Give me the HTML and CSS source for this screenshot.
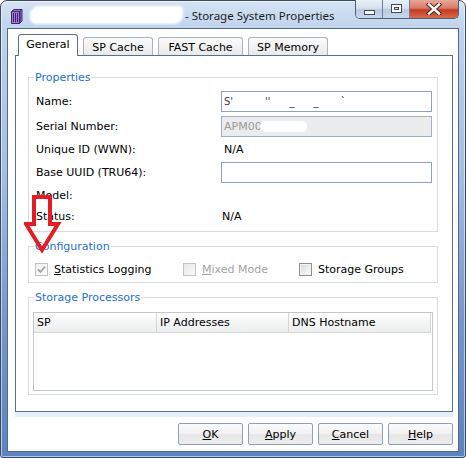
FILE: index.html
```html
<!DOCTYPE html>
<html>
<head>
<meta charset="utf-8">
<link rel="stylesheet" href="styles.css">
</head>
<body>
<div class="window">
  <div class="titlebar">
    <svg class="app-icon" width="13" height="16" viewBox="0 0 13 16">
      <path d="M1.5 3.5 L4 1.5 H12 V13 L9.5 15.5 H1.5 Z" fill="#a57ad8" stroke="#3b2563" stroke-width="1"/>
      <path d="M1.5 3.5 H9.5 V15.5 M9.5 3.5 L12 1.5" fill="none" stroke="#3b2563" stroke-width="1"/>
      <path d="M10 3.5 L12 1.8 V12.8 L10 14.8 Z" fill="#6e4aa3"/>
      <path d="M3.5 5 V14 M5.5 5 V14 M7.5 5 V14" stroke="#3b2563" stroke-width="1"/>
    </svg>
    <span class="name-blob"></span>
    <span class="title">- Storage System Properties</span>
    <div class="caption">
      <div class="cbtn cmin"><span class="min-glyph"></span></div>
      <div class="cbtn cmax"><span class="max-glyph"></span></div>
      <div class="cbtn cclose">
        <svg width="16" height="12" viewBox="0 0 16 12">
          <path d="M3 1.5 L13 10.5 M13 1.5 L3 10.5" stroke="#4a2a22" stroke-width="4.4" stroke-linecap="square"/>
          <path d="M3 1.5 L13 10.5 M13 1.5 L3 10.5" stroke="#ffffff" stroke-width="2.4" stroke-linecap="square"/>
        </svg>
      </div>
    </div>
  </div>

  <div class="client">
    <div class="tabs">
      <div class="tab active t-general">General</div>
      <div class="tab t-spcache">SP Cache</div>
      <div class="tab t-fast">FAST Cache</div>
      <div class="tab t-spmem">SP Memory</div>
    </div>

    <div class="pane">
      <fieldset class="group g-props">
        <legend>Properties</legend>
        <div class="rows">
          <div class="row r-name"><span class="lbl">Name:</span><span class="input"><span class="redacted-name">S'          ''      _      _       `</span></span></div>
          <div class="row r-serial"><span class="lbl">Serial Number:</span><span class="input disabled"><span class="gray">APM00</span><span class="blob"></span></span></div>
          <div class="row r-uid"><span class="lbl">Unique ID (WWN):</span><span class="val v-uid">N/A</span></div>
          <div class="row r-uuid"><span class="lbl">Base UUID (TRU64):</span><span class="input"></span></div>
          <div class="row r-model"><span class="lbl">Model:</span></div>
          <div class="row r-status"><span class="lbl">Status:</span><span class="val v-status">N/A</span></div>
        </div>
      </fieldset>

      <fieldset class="group g-config">
        <legend>Configuration</legend>
        <div class="checks">
          <label class="chk c1"><span class="box checked-dis">
            <svg width="11" height="11" viewBox="0 0 11 11"><path d="M2 5.5 L4.5 8 L9 2.5" fill="none" stroke="#a4a4a4" stroke-width="1.8"/></svg>
          </span><span><u>S</u>tatistics Logging</span></label>
          <label class="chk c2 dis"><span class="box box-dis"></span><span><u>M</u>ixed Mode</span></label>
          <label class="chk c3"><span class="box box-en"></span><span>Storage Groups</span></label>
        </div>
      </fieldset>

      <fieldset class="group g-sp">
        <legend>Storage Processors</legend>
        <div class="list">
          <div class="list-head">
            <div class="col col-sp">SP</div>
            <div class="col col-ip">IP Addresses</div>
            <div class="col col-dns">DNS Hostname</div>
          </div>
        </div>
      </fieldset>
    </div>

    <div class="buttons">
      <div class="btn"><u>O</u>K</div>
      <div class="btn"><u>A</u>pply</div>
      <div class="btn"><u>C</u>ancel</div>
      <div class="btn"><u>H</u>elp</div>
    </div>
  </div>

  <svg class="arrow" width="40" height="64" viewBox="0 0 40 64">
    <polygon points="10,3 26,3 26,30 34,30 18,56 2,30 10,30" fill="none" stroke="#e41c24" stroke-width="4" stroke-linejoin="miter"/>
  </svg>
</div>
</body>
</html>
```

FILE: styles.css
```css
* { box-sizing: border-box; }
html, body { margin: 0; padding: 0; }
body {
  width: 466px;
  height: 458px;
  overflow: hidden;
  background: #ffffff;
  font-family: "DejaVu Sans", Verdana, sans-serif;
  font-size: 11px;
  color: #000;
}

.window {
  position: relative;
  width: 466px;
  height: 458px;
  border: 1px solid #3a4a60;
  border-radius: 7px 7px 3px 3px;
  background: linear-gradient(#d4e3f4 0, #bfd3ec 28px, #a3bfe3 170px, #7597cc 320px, #5c83c0 458px);
  box-shadow: inset 0 0 0 1px rgba(255,255,255,0.55);
  display: flex;
  flex-direction: column;
}

/* Title bar */
.titlebar {
  height: 27px;
  display: flex;
  align-items: center;
  padding-left: 9px;
}
.app-icon { display: block; margin-top: 2px; }
.name-blob {
  width: 153px;
  height: 18px;
  margin-left: 7px;
  background: #fff;
  border-radius: 9px 4px 9px 6px;
  filter: blur(0.8px);
}
.title {
  margin-left: 2px;
  font-family: "Noto Sans", "Open Sans", sans-serif;
  font-size: 11.5px;
  color: #1b1b1b;
  margin-top: 2px;
}
.caption {
  margin-left: auto;
  margin-right: 6px;
  align-self: flex-start;
  margin-top: -1px;
  display: flex;
  height: 19px;
  border: 1px solid #4e5f7a;
  border-top: none;
  border-radius: 0 0 5px 5px;
  overflow: hidden;
}
.cbtn {
  height: 18px;
  display: flex;
  align-items: center;
  justify-content: center;
}
.cmin, .cmax {
  width: 27px;
  background: linear-gradient(#e9f0f8 0, #d6e1ee 45%, #b9c9de 55%, #c9d7e9 100%);
  border-right: 1px solid #6e7f99;
}
.cclose {
  width: 48px;
  background: linear-gradient(#e8a898 0, #d77a66 45%, #c63b22 55%, #d66a4e 100%);
}
.min-glyph {
  width: 11px;
  height: 5px;
  margin-top: 7px;
  background: #fff;
  border: 1px solid #3f4b5e;
}
.max-glyph {
  width: 11px;
  height: 9px;
  border: 1px solid #3f4b5e;
  box-shadow: inset 0 0 0 2px #fff, inset 0 0 0 3px #3f4b5e;
  margin-bottom: 2px;
}

/* Client */
.client {
  margin: 0 6px 5px 6px;
  height: 424px;
  border: 1px solid #566a87;
  background: #fff;
  display: flex;
  flex-direction: column;
}

.tabs {
  height: 26px;
  display: flex;
  align-items: flex-end;
  gap: 5px;
  padding-left: 10px;
  position: relative;
  z-index: 1;
}
.tab {
  height: 18px;
  border: 1px solid #aab3c0;
  border-bottom: none;
  border-radius: 3px 3px 0 0;
  background: linear-gradient(#fbfbfb, #e9e9e9);
  display: flex;
  align-items: center;
  justify-content: center;
  padding-top: 1px;
}
.tab.active {
  height: 22px;
  margin-bottom: -1px;
  border-color: #5b7090;
  background: #fff;
  padding-top: 0;
  padding-bottom: 2px;
}
.t-general { width: 60px; }
.t-spcache { width: 70px; }
.t-fast { width: 85px; }
.t-spmem { width: 80px; }

.pane {
  height: 357px;
  margin: 0 5px 0 7px;
  border: 1px solid #5b7090;
  background: #fff;
  box-shadow: 0 5px 0 #e6eef8;
  display: flex;
  flex-direction: column;
}

.group {
  margin: 0 14px 0 12px;
  padding: 0;
  border: 1px solid #d5dce3;
  min-width: 0;
}
.group legend {
  margin-left: 5px;
  padding: 0 1px;
  color: #1f70cc;
  line-height: 13px;
  font-size: 11px;
}
.g-props { margin-top: 15px; padding: 7px 0 7px 0; }
.g-config { margin-top: 8px; padding: 9px 0 5px 0; }
.g-sp { margin-top: 8px; padding: 8px 0 3px 0; }

.rows { padding: 0 4px 0 7px; }
.row { display: flex; align-items: center; }
.lbl { width: 185px; flex: none; }
.r-name { height: 21px; margin-bottom: 4px; }
.r-serial { height: 21px; }
.r-uid { height: 25px; }
.r-uuid { height: 21px; }
.r-model { height: 25px; }
.r-status { height: 16px; }

.input {
  width: 211px;
  height: 21px;
  border: 1px solid #8ea3bc;
  background: #fff;
  display: flex;
  align-items: center;
  padding-left: 2px;
  overflow: hidden;
}
.input.disabled { background: #ececec; border-color: #9fb0c4; }
.redacted-name { white-space: pre; color: #444; font-size: 10px; letter-spacing: 0; }
.gray { color: #9a9a9a; }
.blob {
  width: 47px;
  height: 11px;
  background: #fff;
  border-radius: 5px;
  margin-left: -2px;
}
.val { padding-left: 3px; }
.v-status { padding-left: 1px; }

.checks { display: flex; align-items: center; height: 15px; padding-left: 6px; }
.chk { display: flex; align-items: center; gap: 6px; }
.c1 { width: 148px; }
.c2 { width: 116px; }
.dis { color: #a3a3a3; }
.box {
  width: 13px;
  height: 13px;
  border: 1px solid #8e8f8f;
  display: flex;
  align-items: center;
  justify-content: center;
}
.checked-dis { border-color: #c2c2c2; background: linear-gradient(135deg, #efefef, #fbfbfb); }
.box-dis { border-color: #c4c4c4; background: linear-gradient(135deg, #e7e7e7, #fafafa); }
.box-en { background: linear-gradient(135deg, #d9dadb, #fbfbfb); box-shadow: inset 0 0 0 1px #f4f4f4; }

.list {
  height: 79px;
  margin: 0 4px;
  border: 1px solid #c3c7cc;
  background: #fff;
}
.list-head {
  display: flex;
  height: 20px;
  margin-right: 1px;
  background: linear-gradient(#ffffff, #f4f5f6 50%, #eceded);
  border-bottom: 1px solid #d5d5d5;
}
.col {
  display: flex;
  align-items: center;
  padding-left: 3px;
  border-right: 1px solid #d5d5d5;
}
.col-sp { width: 123px; }
.col-ip { width: 132px; }
.col-dns { flex: 1; }

.buttons {
  margin-top: 11px;
  display: flex;
  justify-content: flex-end;
  gap: 5px;
  padding-right: 5px;
}
.btn {
  width: 65px;
  height: 22px;
  border: 1px solid #8aa1bd;
  border-radius: 2px;
  background: linear-gradient(#fbfbfb 0, #f1f1f1 50%, #e6e6e6 51%, #ececec 100%);
  display: flex;
  align-items: center;
  justify-content: center;
}

.arrow {
  position: absolute;
  left: 23px;
  top: 193px;
  z-index: 5;
}
```
